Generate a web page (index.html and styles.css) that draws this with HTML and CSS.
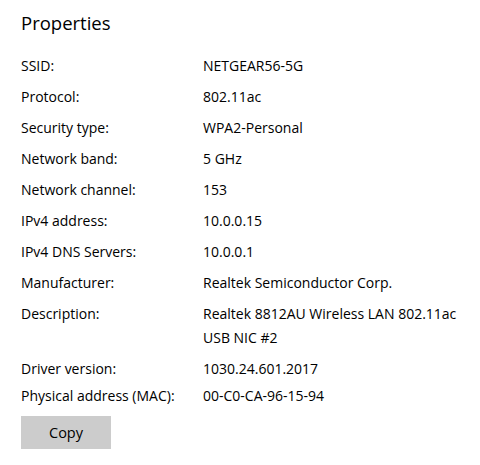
FILE: index.html
```html
<!DOCTYPE html>
<html>
<head>
<meta charset="utf-8">
<link rel="stylesheet" href="styles.css">
</head>
<body>
<div class="panel">
  <h1 class="title">Properties</h1>
  <div class="props">
    <div class="row"><div class="label">SSID:</div><div class="value">NETGEAR56-5G</div></div>
    <div class="row"><div class="label">Protocol:</div><div class="value">802.11ac</div></div>
    <div class="row"><div class="label">Security type:</div><div class="value">WPA2-Personal</div></div>
    <div class="row"><div class="label">Network band:</div><div class="value">5 GHz</div></div>
    <div class="row"><div class="label">Network channel:</div><div class="value">153</div></div>
    <div class="row"><div class="label">IPv4 address:</div><div class="value">10.0.0.15</div></div>
    <div class="row"><div class="label">IPv4 DNS Servers:</div><div class="value">10.0.0.1</div></div>
    <div class="row"><div class="label">Manufacturer:</div><div class="value">Realtek Semiconductor Corp.</div></div>
    <div class="row"><div class="label">Description:</div><div class="value multi">Realtek 8812AU Wireless LAN 802.11ac<br>USB NIC #2</div></div>
    <div class="row tight"><div class="label">Driver version:</div><div class="value">1030.24.601.2017</div></div>
    <div class="row last"><div class="label">Physical address (MAC):</div><div class="value">00-C0-CA-96-15-94</div></div>
  </div>
  <button class="copy">Copy</button>
</div>
</body>
</html>
```
FILE: styles.css
```css
html, body {
  margin: 0;
  padding: 0;
  background: #ffffff;
}
body {
  font-family: "Open Sans", "Noto Sans", sans-serif;
  color: #000000;
  width: 480px;
  height: 465px;
  overflow: hidden;
}
.panel {
  padding: 9px 0 0 21px;
}
.title {
  margin: 0;
  font-size: 18.5px;
  font-weight: 400;
  line-height: 28px;
}
.props {
  margin-top: 19px;
  display: flex;
  flex-direction: column;
}
.row {
  display: grid;
  grid-template-columns: 182px 1fr;
  font-size: 14px;
  line-height: 20px;
  margin-bottom: 11px;
}
.value.multi {
  line-height: 24px;
  margin-top: -2px;
  margin-bottom: -2px;
}
.row.tight {
  margin-bottom: 7px;
}
.row.last {
  margin-bottom: 10px;
}
.copy {
  display: block;
  width: 90px;
  height: 33px;
  border: 0;
  padding: 0;
  background: #cccccc;
  font-family: inherit;
  font-size: 14.5px;
  color: #000000;
}
```
